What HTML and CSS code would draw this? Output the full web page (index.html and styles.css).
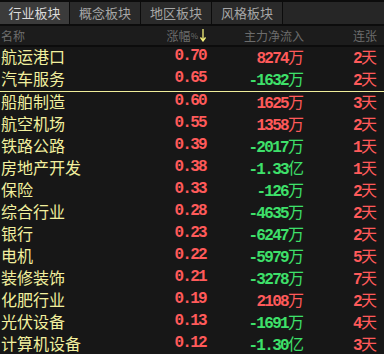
FILE: index.html
```html
<!DOCTYPE html>
<html>
<head>
<meta charset="utf-8">
<link rel="stylesheet" href="styles.css">
</head>
<body>
<div class="panel">
  <div class="tabs">
    <div class="tab active">行业板块</div>
    <div class="tab">概念板块</div>
    <div class="tab">地区板块</div>
    <div class="tab">风格板块</div>
    <div class="tab-fill"></div>
  </div>
  <div class="head row-grid">
    <div class="c-name">名称</div>
    <div class="c-num">涨幅<span class="pct">%</span><svg class="arrow" width="6" height="13" viewBox="0 0 6 13"><path d="M3 0V12M0.5 8.5L3 12L5.5 8.5" stroke="#f4f07a" stroke-width="1.3" fill="none"/></svg></div>
    <div class="c-num">主力净流入</div>
    <div class="c-num">连张</div>
  </div>
  <div class="rows">
    <div class="row row-grid"><div class="c-name">航运港口</div><div class="c-num up mono">0.70</div><div class="c-num up"><span class="mono">8274</span>万</div><div class="c-num up"><span class="mono">2</span>天</div></div>
    <div class="row row-grid"><div class="c-name">汽车服务</div><div class="c-num up mono">0.65</div><div class="c-num down"><span class="mono">-1632</span>万</div><div class="c-num up"><span class="mono">2</span>天</div></div>
    <div class="divider"></div>
    <div class="row row-grid"><div class="c-name">船舶制造</div><div class="c-num up mono">0.60</div><div class="c-num up"><span class="mono">1625</span>万</div><div class="c-num up"><span class="mono">3</span>天</div></div>
    <div class="row row-grid"><div class="c-name">航空机场</div><div class="c-num up mono">0.55</div><div class="c-num up"><span class="mono">1358</span>万</div><div class="c-num up"><span class="mono">2</span>天</div></div>
    <div class="row row-grid"><div class="c-name">铁路公路</div><div class="c-num up mono">0.39</div><div class="c-num down"><span class="mono">-2017</span>万</div><div class="c-num up"><span class="mono">1</span>天</div></div>
    <div class="row row-grid"><div class="c-name">房地产开发</div><div class="c-num up mono">0.38</div><div class="c-num down"><span class="mono">-1.33</span>亿</div><div class="c-num up"><span class="mono">1</span>天</div></div>
    <div class="row row-grid"><div class="c-name">保险</div><div class="c-num up mono">0.33</div><div class="c-num down"><span class="mono">-126</span>万</div><div class="c-num up"><span class="mono">2</span>天</div></div>
    <div class="row row-grid"><div class="c-name">综合行业</div><div class="c-num up mono">0.28</div><div class="c-num down"><span class="mono">-4635</span>万</div><div class="c-num up"><span class="mono">2</span>天</div></div>
    <div class="row row-grid"><div class="c-name">银行</div><div class="c-num up mono">0.23</div><div class="c-num down"><span class="mono">-6247</span>万</div><div class="c-num up"><span class="mono">2</span>天</div></div>
    <div class="row row-grid"><div class="c-name">电机</div><div class="c-num up mono">0.22</div><div class="c-num down"><span class="mono">-5979</span>万</div><div class="c-num up"><span class="mono">5</span>天</div></div>
    <div class="row row-grid"><div class="c-name">装修装饰</div><div class="c-num up mono">0.21</div><div class="c-num down"><span class="mono">-3278</span>万</div><div class="c-num up"><span class="mono">7</span>天</div></div>
    <div class="row row-grid"><div class="c-name">化肥行业</div><div class="c-num up mono">0.19</div><div class="c-num up"><span class="mono">2108</span>万</div><div class="c-num up"><span class="mono">2</span>天</div></div>
    <div class="row row-grid"><div class="c-name">光伏设备</div><div class="c-num up mono">0.13</div><div class="c-num down"><span class="mono">-1691</span>万</div><div class="c-num up"><span class="mono">4</span>天</div></div>
    <div class="row row-grid"><div class="c-name">计算机设备</div><div class="c-num up mono">0.12</div><div class="c-num down"><span class="mono">-1.30</span>亿</div><div class="c-num up"><span class="mono">3</span>天</div></div>
  </div>
</div>
</body>
</html>
```
FILE: styles.css
```css
html, body {
  margin: 0;
  padding: 0;
  background: #171717;
}
body {
  width: 384px;
  height: 354px;
  overflow: hidden;
  font-family: "Noto Sans CJK SC", "DejaVu Sans", sans-serif;
}
.panel {
  display: flex;
  flex-direction: column;
}
.tabs {
  display: flex;
  height: 22px;
  border-top: 2px solid #0c0c0c;
  border-bottom: 2px solid #0c0c0c;
  background: #262626;
}
.tab {
  width: 70px;
  border-right: 1px solid #0c0c0c;
  background: #2a2a2a;
  color: #a6a6a6;
  font-size: 13px;
  line-height: 22px;
  text-align: center;
}
.tab.active {
  width: 69px;
  background: #3b3b3b;
  color: #dcdcdc;
}
.tab-fill {
  flex: 1;
  background: #262626;
}
.row-grid {
  display: grid;
  grid-template-columns: 140px 66px 98px 73px;
  padding-right: 7px;
}
.head {
  height: 19px;
  background: #1c1c1c;
  border-bottom: 2px solid #0c0c0c;
  color: #6c6c6c;
  font-size: 12px;
  line-height: 19px;
  align-items: center;
}
.head .c-num {
  display: flex;
  justify-content: flex-end;
  align-items: center;
}
.pct {
  font-size: 8px;
  margin-right: 1px;
}
.arrow {
  margin-left: 1px;
}
.c-name {
  padding-left: 1px;
  white-space: nowrap;
}
.c-num {
  text-align: right;
  white-space: nowrap;
}
.row {
  height: 22px;
  line-height: 18px;
  font-size: 16px;
  color: #f2f09e;
  align-items: start;
}
.divider {
  height: 1px;
  background: #f0ee9a;
}
.mono {
  font-family: "Liberation Mono", "DejaVu Sans Mono", monospace;
  font-weight: bold;
  font-size: 16px;
  letter-spacing: -1.7px;
}
.up { color: #ff5a5a; }
.down { color: #3ee06a; }
```
